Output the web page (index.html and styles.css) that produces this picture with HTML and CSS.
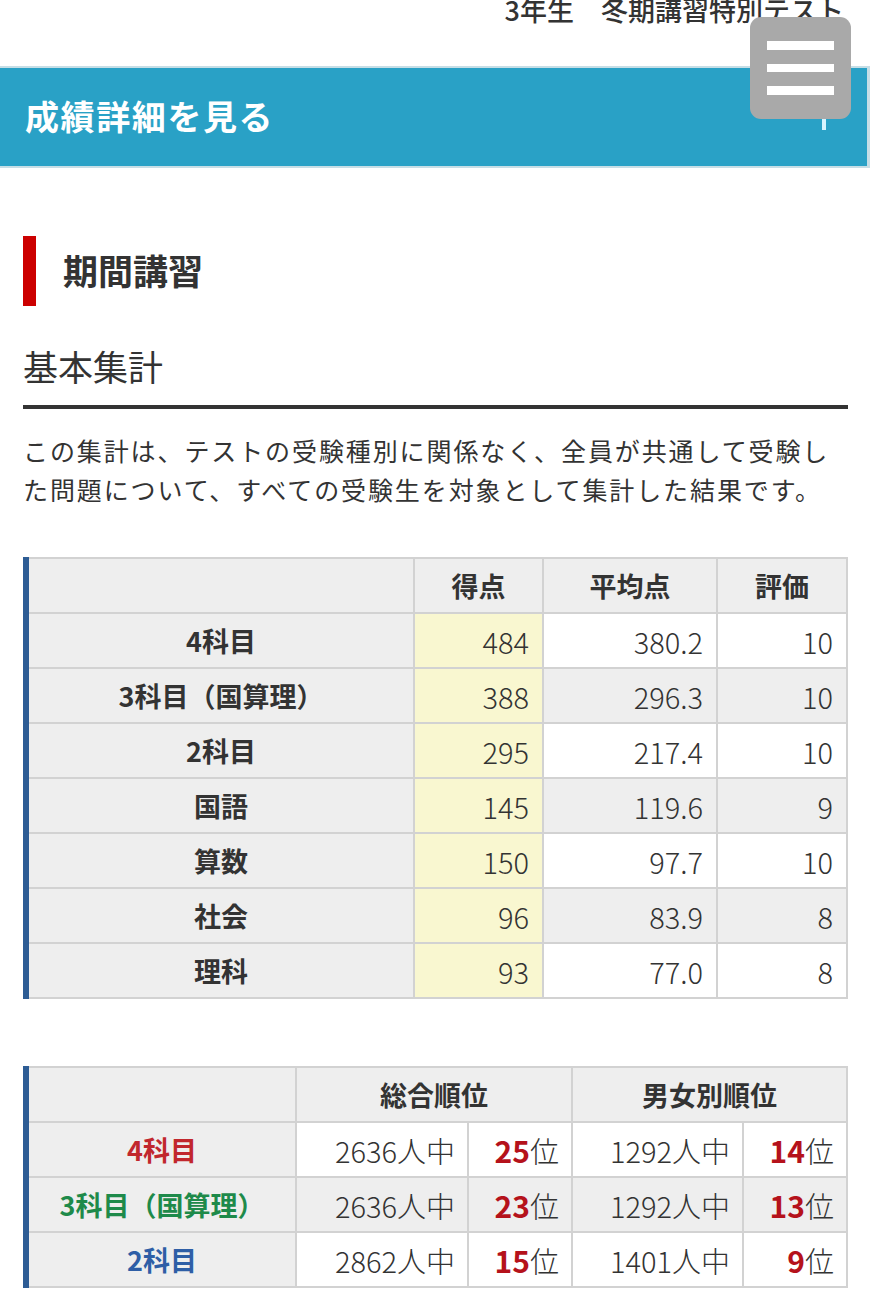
FILE: index.html
```html
<!DOCTYPE html>
<html lang="ja">
<head>
<meta charset="utf-8">
<title>期間講習 成績</title>
<link rel="stylesheet" href="styles.css">
</head>
<body>
<div class="top">3年生　冬期講習特別テスト</div>
<div class="detail-bar">
  <span class="detail-title">成績詳細を見る</span>
  <span class="plus"></span>
</div>
<button class="menu-btn" aria-label="menu"><span></span><span></span><span></span></button>

<main class="content">
  <h2 class="sec-title">期間講習</h2>
  <h3 class="sub-title">基本集計</h3>
  <p class="desc">この集計は、テストの受験種別に関係なく、全員が共通して受験した問題について、すべての受験生を対象として集計した結果です。</p>

  <table class="score">
    <colgroup><col class="c-label"><col class="c-score"><col class="c-avg"><col class="c-eval"></colgroup>
    <thead>
      <tr><th class="lbl"></th><th>得点</th><th>平均点</th><th>評価</th></tr>
    </thead>
    <tbody>
      <tr><th class="lbl">4科目</th><td class="pt">484</td><td>380.2</td><td>10</td></tr>
      <tr class="alt"><th class="lbl">3科目（国算理）</th><td class="pt">388</td><td>296.3</td><td>10</td></tr>
      <tr><th class="lbl">2科目</th><td class="pt">295</td><td>217.4</td><td>10</td></tr>
      <tr class="alt"><th class="lbl">国語</th><td class="pt">145</td><td>119.6</td><td>9</td></tr>
      <tr><th class="lbl">算数</th><td class="pt">150</td><td>97.7</td><td>10</td></tr>
      <tr class="alt"><th class="lbl">社会</th><td class="pt">96</td><td>83.9</td><td>8</td></tr>
      <tr><th class="lbl">理科</th><td class="pt">93</td><td>77.0</td><td>8</td></tr>
    </tbody>
  </table>

  <table class="rank">
    <colgroup><col class="r-label"><col class="r-num"><col class="r-pos"><col class="r-num2"><col class="r-pos"></colgroup>
    <thead>
      <tr><th class="lbl"></th><th colspan="2">総合順位</th><th colspan="2">男女別順位</th></tr>
    </thead>
    <tbody>
      <tr><th class="lbl red">4科目</th><td>2636人中</td><td><b>25</b>位</td><td>1292人中</td><td><b>14</b>位</td></tr>
      <tr class="alt"><th class="lbl green">3科目（国算理）</th><td>2636人中</td><td><b>23</b>位</td><td>1292人中</td><td><b>13</b>位</td></tr>
      <tr><th class="lbl blue">2科目</th><td>2862人中</td><td><b>15</b>位</td><td>1401人中</td><td><b>9</b>位</td></tr>
    </tbody>
  </table>
</main>
</body>
</html>
```

FILE: styles.css
```css
* { box-sizing: border-box; }
html, body { margin: 0; padding: 0; }
body {
  font-family: "Noto Sans CJK JP", "Noto Sans", sans-serif;
  color: #333;
  background: #fff;
  width: 870px;
  position: relative;
}
.top {
  height: 66px;
  text-align: right;
  padding-right: 26px;
  font-size: 27px;
  line-height: 20px;
  font-weight: 500;
  color: #333;
  overflow: hidden;
  white-space: nowrap;
}
.detail-bar {
  position: relative;
  height: 102px;
  width: 870px;
  background: #29a1c6;
  border-top: 2px solid #c6dee6;
  border-bottom: 2px solid #c6dee6;
  border-right: 3px solid #c6dee6;
  display: flex;
  align-items: center;
  padding-left: 25px;
  padding-bottom: 4px;
}
.detail-title {
  color: #fff;
  font-size: 34px;
  font-weight: 700;
  letter-spacing: 1.6px;
}
.plus {
  position: absolute;
  right: 41px;
  top: 34px;
  width: 4px;
  height: 28px;
  background: #d6f4ff;
}
.menu-btn {
  position: absolute;
  left: 750px;
  top: 17px;
  width: 101px;
  height: 102px;
  border: 0;
  border-radius: 11px;
  background: #a9a9a9;
  padding: 24px 17px 0;
  display: flex;
  flex-direction: column;
  gap: 14px;
}
.menu-btn span {
  display: block;
  width: 67px;
  height: 8.5px;
  background: #fff;
}
.content {
  padding: 68px 22px 40px 23px;
}
.sec-title {
  margin: 0;
  height: 70px;
  border-left: 13px solid #cc0000;
  padding-left: 27px;
  font-size: 35px;
  font-weight: 700;
  line-height: 68px;
  color: #333;
}
.sub-title {
  margin: 38px 0 0;
  font-size: 35px;
  font-weight: 400;
  line-height: 44px;
  padding-bottom: 17px;
  border-bottom: 4px solid #333;
}
.desc {
  margin: 22px 0 0;
  font-size: 25px;
  line-height: 39px;
  letter-spacing: 1.9px;
}
table {
  width: 821px;
  border-collapse: collapse;
  table-layout: fixed;
  font-size: 26px;
}
.score { margin-top: 48px; }
.rank { margin-top: 67px; }
th, td {
  border: 2px solid #d2d2d2;
  height: 55px;
  padding: 0 13px 0 0;
  line-height: 30px;
}
th {
  background: #eee;
  font-weight: 700;
  font-size: 27px;
  text-align: center;
  padding: 0;
}
td {
  text-align: right;
  font-weight: 300;
  font-size: 29px;
  background: #fff;
}
tr.alt td { background: #eee; }
td.pt, tr.alt td.pt { background: #f9f7d0; }
th.lbl { border-left: 6px solid #2d5c94; }
.c-label { width: 388px; }
.c-score { width: 129px; }
.c-avg { width: 174px; }
.c-eval { width: 130px; }
.r-label { width: 270px; }
.r-num { width: 172px; }
.r-pos { width: 104px; }
.r-num2 { width: 171px; }
.rank td { padding-right: 12px; }
.rank td b { color: #b5121b; font-weight: 700; font-size: 30px; }
.red { color: #c1272d; }
.green { color: #1e8a4a; }
.blue { color: #2e5ea6; }
```
